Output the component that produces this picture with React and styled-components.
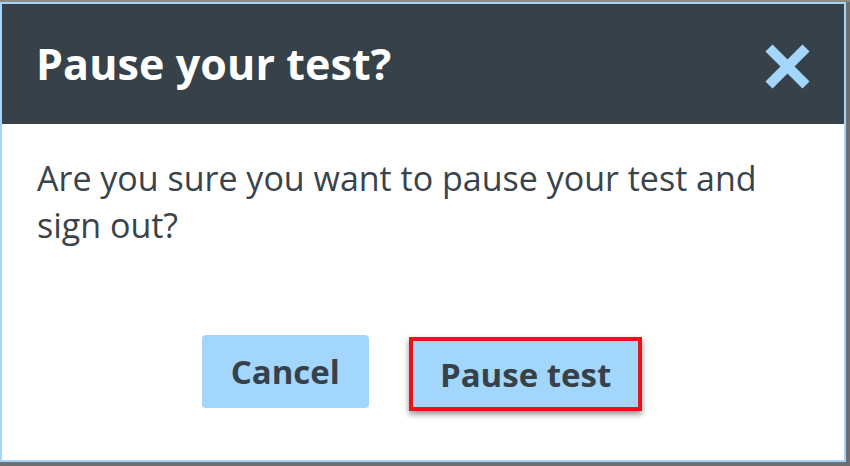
import React from 'react';
import styled, { createGlobalStyle } from 'styled-components';

const Global = createGlobalStyle`
  html, body {
    margin: 0;
    padding: 0;
    background: #7b7b7b;
    font-family: "Open Sans", "Liberation Sans", sans-serif;
  }
`;

function CloseIcon() {
  return (
    <svg width="45" height="45" viewBox="0 0 45 45">
      <g stroke="#a3d6fb" strokeWidth="10" strokeLinecap="butt">
        <line x1="4" y1="4" x2="41" y2="41" />
        <line x1="41" y1="4" x2="4" y2="41" />
      </g>
    </svg>
  );
}

export default function App() {
  return (
    <>
      <Global />
      <Page>
        <Dialog>
          <Header>
            <Title>Pause your test?</Title>
            <CloseButton aria-label="Close">
              <CloseIcon />
            </CloseButton>
          </Header>
          <Body>
            <Message>Are you sure you want to pause your test and sign out?</Message>
            <Actions>
              <Button>Cancel</Button>
              <Button highlighted>Pause test</Button>
            </Actions>
          </Body>
        </Dialog>
      </Page>
    </>
  );
}

const Page = styled.div`
  width: 850px;
  height: 466px;
  box-sizing: border-box;
  padding: 2px 4px 4px 0;
  background: linear-gradient(#8e8a86 0 2px, #6f6f6f 2px);
`;

const Dialog = styled.div`
  height: 100%;
  box-sizing: border-box;
  border: 2px solid #a3d6fb;
  background: #ffffff;
  display: flex;
  flex-direction: column;
`;

const Header = styled.div`
  height: 120px;
  flex: none;
  background: #36414a;
  display: flex;
  align-items: center;
  justify-content: space-between;
  padding: 0 34px 0 34px;
`;

const Title = styled.h1`
  margin: 0;
  color: #ffffff;
  font-size: 43px;
  font-weight: 700;
  letter-spacing: 0.1px;
  padding-bottom: 2px;
`;

const CloseButton = styled.button`
  border: 0;
  background: none;
  padding: 0;
  margin-top: 4px;
  display: flex;
  cursor: pointer;
`;

const Body = styled.div`
  flex: 1;
  display: flex;
  flex-direction: column;
  padding: 31px 30px 0 35px;
`;

const Message = styled.p`
  margin: 0;
  color: #39434b;
  font-size: 34px;
  line-height: 47px;
  max-width: 740px;
`;

const Actions = styled.div`
  display: flex;
  justify-content: center;
  align-items: flex-start;
  gap: 40px;
  margin-top: 86px;
  margin-right: 7px;
`;

const Button = styled.button`
  font-family: inherit;
  font-size: 33px;
  font-weight: 700;
  color: #36414a;
  background: #a3d6fb;
  border: ${p => (p.highlighted ? '4px solid #e8121a' : '0')};
  border-radius: ${p => (p.highlighted ? '0' : '4px')};
  box-shadow: ${p => (p.highlighted ? '0 3px 6px rgba(0,0,0,0.45)' : 'none')};
  height: ${p => (p.highlighted ? '74px' : '73px')};
  margin-top: ${p => (p.highlighted ? '2px' : '0')};
  padding: ${p => (p.highlighted ? '0 27px' : '0 29px')};
  cursor: pointer;
`;
